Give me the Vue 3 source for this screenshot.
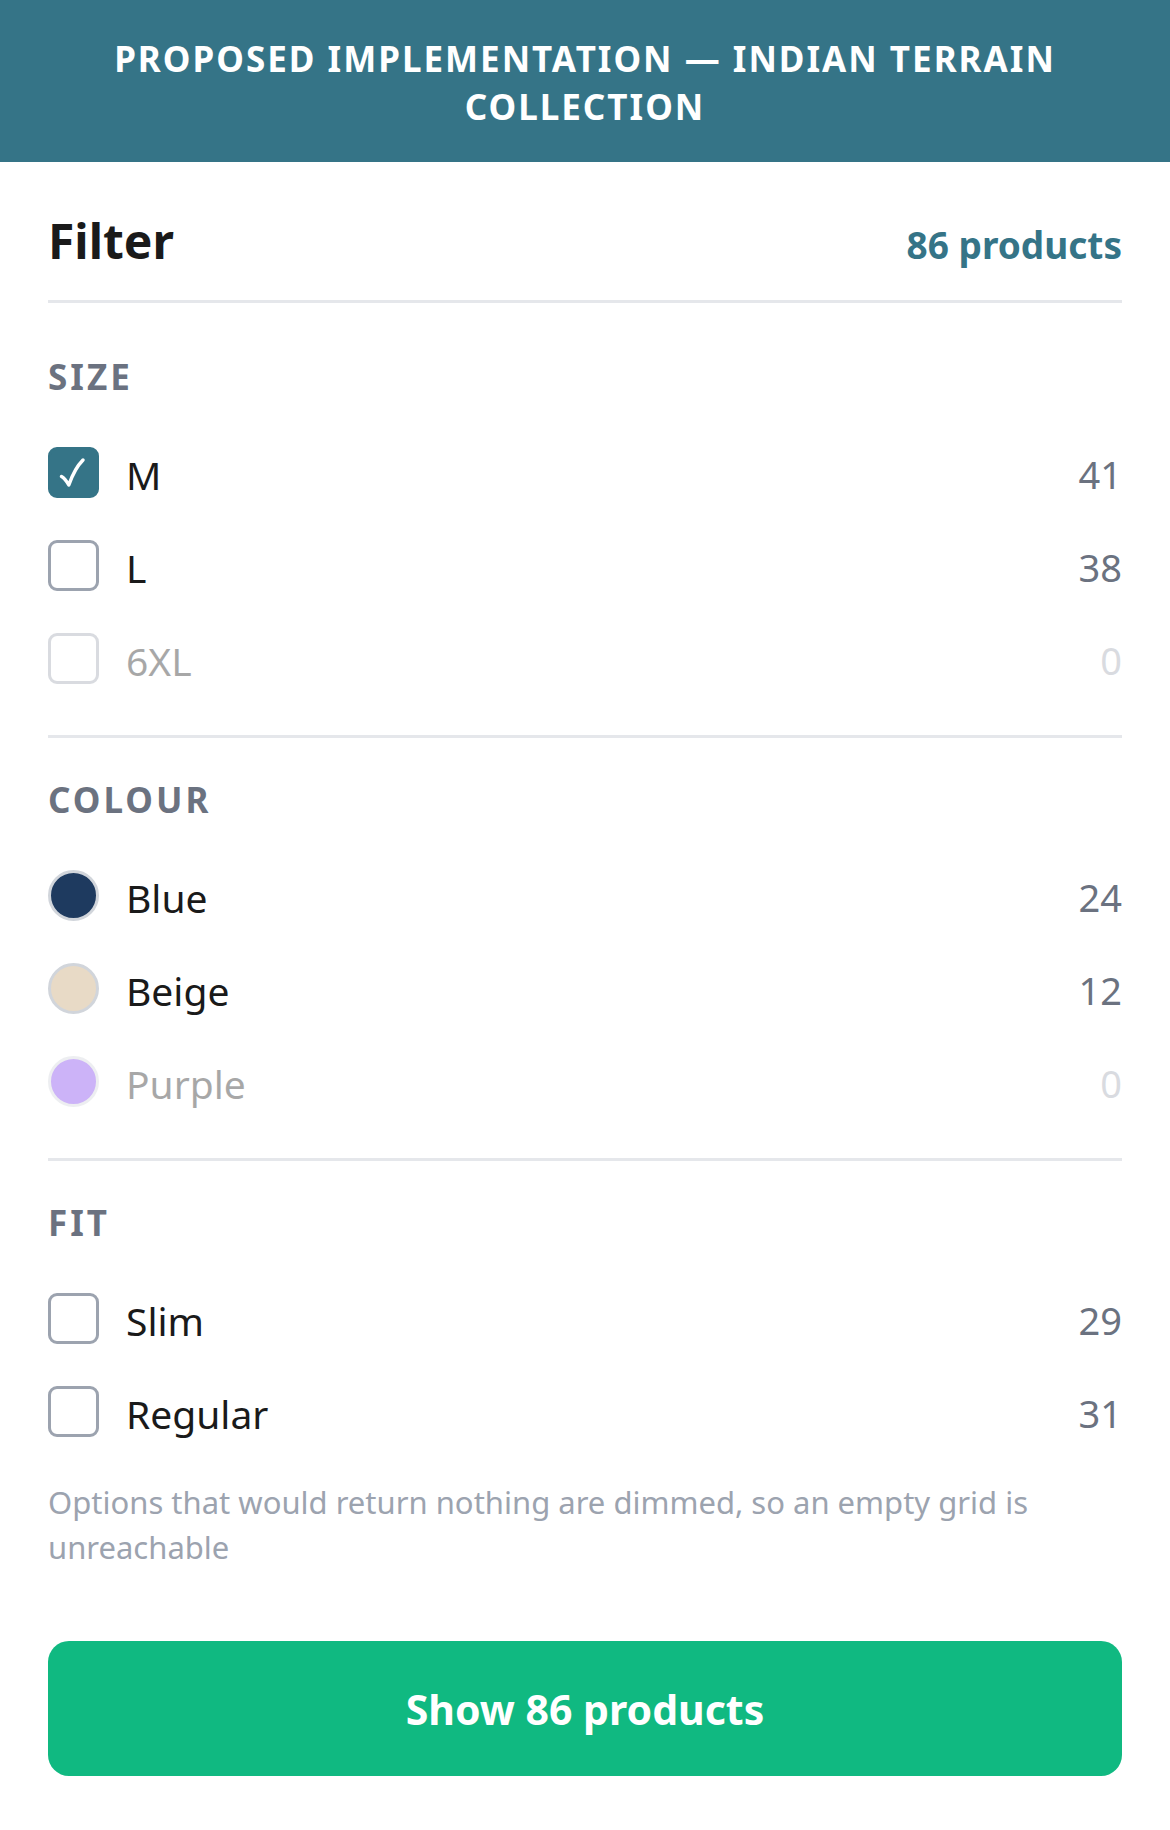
<template>
  <main class="filter-page">
    <header class="banner">
      Proposed implementation — Indian Terrain Collection
    </header>

    <form class="filter-panel" @submit.prevent>
      <div class="filter-header">
        <h1 class="filter-title">Filter</h1>
        <span class="filter-total">{{ total }} products</span>
      </div>

      <fieldset v-for="group in groups" :key="group.name" class="filter-group">
        <legend class="group-title">{{ group.name }}</legend>
        <label
          v-for="option in group.options"
          :key="option.label"
          class="filter-row"
          :class="{ 'filter-row-empty': option.count === 0 }"
        >
          <span class="box-wrapper">
            <input
              v-model="selected"
              type="checkbox"
              class="filter-box"
              :class="{ swatch: option.color }"
              :value="option.label"
              :disabled="option.count === 0"
              :style="option.color ? { backgroundColor: option.color } : null"
            />
            <svg
              v-if="!option.color && selected.includes(option.label)"
              viewBox="0 0 51 51"
              class="checkmark"
              aria-hidden="true"
            >
              <path d="M13.500 29.500C16.500 31 18.500 34 20.800 38C24.500 27.500 29 19 35 13" />
            </svg>
          </span>
          <span class="filter-label">{{ option.label }}</span>
          <span class="filter-count">{{ option.count }}</span>
        </label>
      </fieldset>

      <p class="filter-note">
        Options that would return nothing are dimmed, so an empty grid is
        unreachable
      </p>

      <button type="submit" class="show-button">
        Show {{ total }} products
      </button>
    </form>
  </main>
</template>

<script setup>
import { ref } from 'vue';

const total = ref(86);
const selected = ref(['M']);

const groups = [
  {
    name: 'Size',
    options: [
      { label: 'M', count: 41 },
      { label: 'L', count: 38 },
      { label: '6XL', count: 0 },
    ],
  },
  {
    name: 'Colour',
    options: [
      { label: 'Blue', count: 24, color: '#1e3a5f' },
      { label: 'Beige', count: 12, color: '#e8dac6' },
      { label: 'Purple', count: 0, color: '#7c3aed' },
    ],
  },
  {
    name: 'Fit',
    options: [
      { label: 'Slim', count: 29 },
      { label: 'Regular', count: 31 },
    ],
  },
];
</script>

<style>
body {
  margin: 0;
  background: #ffffff;
}
</style>

<style scoped>
.filter-page {
  font-family: 'Segoe UI', 'Noto Sans', 'Open Sans', sans-serif;
  color: #1a1a1a;
}

.banner {
  padding: 35px 48px 31px;
  background: #357487;
  color: #ffffff;
  font-size: 35px;
  line-height: 48px;
  font-weight: 700;
  letter-spacing: 2px;
  text-align: center;
  text-transform: uppercase;
}

.filter-panel {
  padding: 44px 48px 54px;
}

.filter-header {
  display: flex;
  align-items: baseline;
  justify-content: space-between;
  padding-bottom: 25px;
  border-bottom: 3px solid #e5e7eb;
}

.filter-title {
  margin: 0;
  font-size: 48px;
  line-height: 69px;
  font-weight: 700;
}

.filter-total {
  color: #357487;
  font-size: 37px;
  line-height: 54px;
  font-weight: 700;
}

.filter-group {
  min-width: 0;
  margin: 0;
  padding: 38px 0 30px;
  border: 0;
  border-bottom: 3px solid #e5e7eb;
}

.filter-header + .filter-group {
  padding-top: 50px;
}

.filter-group:last-of-type {
  padding-bottom: 0;
  border-bottom: 0;
}

.group-title {
  float: left;
  width: 100%;
  padding: 0;
  margin-bottom: 25px;
  color: #6b7280;
  font-size: 35px;
  line-height: 48px;
  font-weight: 700;
  letter-spacing: 3px;
  text-transform: uppercase;
}

.filter-row {
  display: flex;
  align-items: center;
  gap: 27px;
  clear: both;
  padding: 18px 0;
  line-height: 53px;
  cursor: pointer;
}

.filter-row-empty {
  opacity: 0.38;
  cursor: default;
}

.box-wrapper {
  display: grid;
}

.box-wrapper > * {
  grid-area: 1 / 1;
}

.filter-box {
  appearance: none;
  box-sizing: border-box;
  width: 51px;
  height: 51px;
  margin: 0;
  border: 3px solid #9ca3af;
  border-radius: 9px;
  background: #ffffff;
}

.filter-box:checked {
  border-color: #357487;
  background: #357487;
}

.filter-box.swatch {
  border-color: #d1d5db;
  border-radius: 50%;
}

.checkmark {
  width: 51px;
  height: 51px;
  fill: none;
  stroke: #ffffff;
  stroke-width: 3.5;
  stroke-linecap: round;
  stroke-linejoin: round;
  pointer-events: none;
}

.filter-label,
.filter-count {
  padding-top: 4px;
}

.filter-label {
  flex: 1;
  font-size: 39px;
}

.filter-count {
  color: #6b7280;
  font-size: 38px;
}

.filter-row-empty .filter-count {
  color: #9ca3af;
}

.filter-note {
  margin: 22px 0 71px;
  color: #9ca3af;
  font-size: 31px;
  line-height: 45px;
}

.show-button {
  display: block;
  width: 100%;
  padding: 40px 39px 38px;
  border: 0;
  border-radius: 21px;
  background: #10b981;
  color: #ffffff;
  font-family: inherit;
  font-size: 41px;
  line-height: 57px;
  font-weight: 700;
  cursor: pointer;
}
</style>
